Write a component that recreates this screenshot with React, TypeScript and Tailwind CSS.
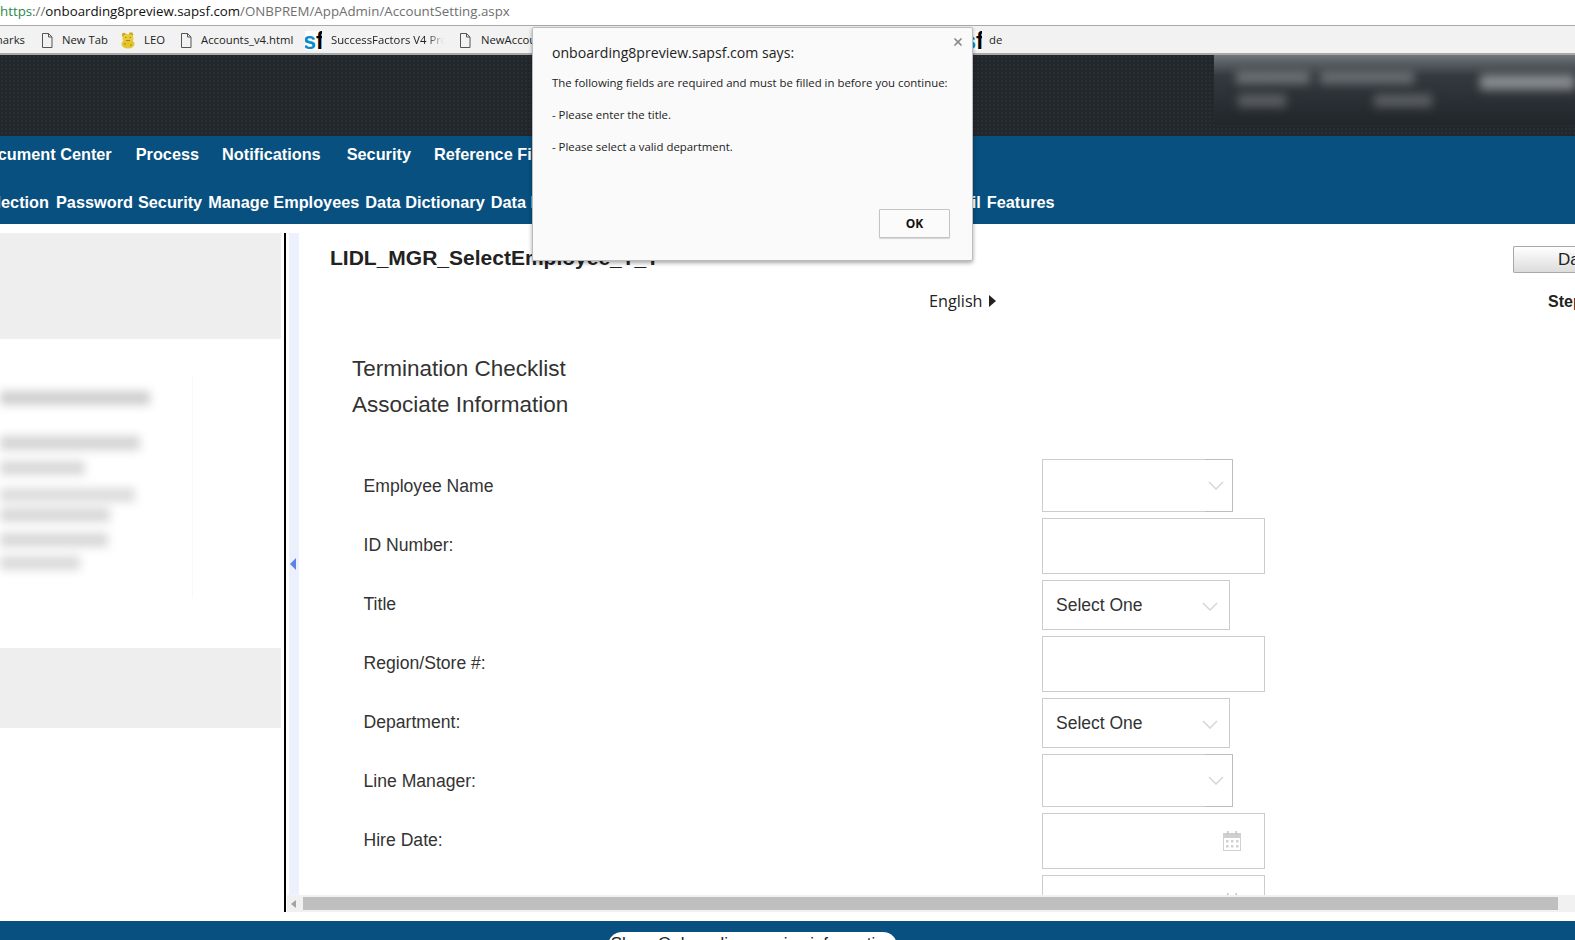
import { X } from "lucide-react";

const sans = "font-['Liberation_Sans',Arial,sans-serif]";
const ui = "font-['Open_Sans',sans-serif]";

function DocIcon() {
  return (
    <svg width="12" height="15" viewBox="0 0 12 15" fill="none" stroke="#555" strokeWidth="1" className="shrink-0">
      <path d="M1.5 .5h6l3.5 3.5v10.500h-9.500z" />
      <path d="M7.500 .5v3.500h3.500" />
    </svg>
  );
}

function SfLogo() {
  return (
    <span className={`flex h-[19px] w-[17px] shrink-0 items-end justify-center overflow-hidden bg-white pb-[1px] font-bold leading-[16px] ${sans}`}>
      <span className="text-[23px] text-[#0a8ccb]">s</span>
      <span className="text-[23px] text-black">f</span>
    </span>
  );
}

function LeoIcon() {
  return (
    <svg width="14" height="17" viewBox="0 0 14 17" className="shrink-0">
      <circle cx="3" cy="3" r="2.200" fill="#c9a82a" />
      <circle cx="10" cy="2.500" r="2.200" fill="#c9a82a" />
      <ellipse cx="7" cy="6.500" rx="5.500" ry="4.500" fill="#e9cc36" />
      <ellipse cx="7" cy="12" rx="6.500" ry="4.500" fill="#e3c42f" />
      <path d="M4 5.500h1.500M8.500 5.500h1.500M5 8.500h4M3 12h2M9 13h2" stroke="#a88a1c" strokeWidth="1" fill="none" />
    </svg>
  );
}

function Chevron() {
  return (
    <svg width="16" height="9" viewBox="0 0 16 9" fill="none" stroke="#d6d6d6" strokeWidth="1.500">
      <path d="M1 1l7 7 7-7" />
    </svg>
  );
}

function CalendarIcon() {
  return (
    <svg width="18" height="20" viewBox="0 0 18 20" className="shrink-0">
      <rect x=".5" y="2.500" width="17" height="17" fill="#fff" stroke="#d0d0d0" />
      <rect x="1" y="3" width="16" height="4" fill="#cfcfcf" />
      <rect x="4" y="0" width="1.500" height="4" fill="#c4c4c4" />
      <rect x="12.500" y="0" width="1.500" height="4" fill="#c4c4c4" />
      {[3, 8, 13].map((x) =>
        [9, 14].map((y) => <rect key={`${x}-${y}`} x={x} y={y} width="2.500" height="2.500" fill="#d2d2d2" />)
      )}
    </svg>
  );
}

// the wider lookup boxes have a darker corner round the arrow
function LookupBox() {
  return (
    <div className="flex h-[53px] w-[191px] shrink-0 justify-end border border-[#cccccc] bg-white">
      <div className="-my-px -mr-px flex w-[28px] items-center justify-center border-y border-r border-[#bdbdbd] pr-[6px]">
        <Chevron />
      </div>
    </div>
  );
}

function SelectBox() {
  return (
    <div className={`flex h-[50px] w-[188px] shrink-0 items-center justify-between border border-[#cccccc] bg-white pl-[13px] pr-[11px] text-[17.500px] text-[#333] ${sans}`}>
      <span>Select One</span>
      <span className="mt-[3px] flex">
        <Chevron />
      </span>
    </div>
  );
}

function TextBox({ calendar }: { calendar?: boolean }) {
  return (
    <div className="flex h-[56px] w-[223px] shrink-0 items-center justify-end border border-[#cccccc] bg-white pr-[23px]">
      {calendar && <CalendarIcon />}
    </div>
  );
}

const labels = ["Employee Name", "ID Number:", "Title", "Region/Store #:", "Department:", "Line Manager:", "Hire Date:"];

const blurLines = [
  { w: "w-[150px]", mt: "mt-[52px]", tone: "bg-[#cfcfcf]" },
  { w: "w-[140px]", mt: "mt-[31px]", tone: "bg-[#d4d4d4]" },
  { w: "w-[85px]", mt: "mt-[11px]", tone: "bg-[#d8d8d8]" },
  { w: "w-[135px]", mt: "mt-[13px]", tone: "bg-[#dcdcdc]" },
  { w: "w-[110px]", mt: "mt-[6px]", tone: "bg-[#d8d8d8]" },
  { w: "w-[108px]", mt: "mt-[11px]", tone: "bg-[#d8d8d8]" },
  { w: "w-[80px]", mt: "mt-[9px]", tone: "bg-[#dadada]" },
];

export default function App() {
  return (
    <div className={`relative flex h-[940px] w-[1575px] flex-col overflow-hidden bg-white ${sans}`}>
      {/* Browser address bar */}
      <div className={`flex h-[26px] shrink-0 items-center border-b border-[#a9a9a9] bg-white pb-[2px] text-[13.300px] whitespace-nowrap text-[#6f6f6f] ${ui}`}>
        <span className="text-[#2a8a4a]">https</span>
        <span>://</span>
        <span className="text-[#111]">onboarding8preview.sapsf.com</span>
        <span>/ONBPREM/AppAdmin/AccountSetting.aspx</span>
      </div>

      {/* Bookmarks */}
      <div className={`flex h-[29px] shrink-0 items-center overflow-hidden border-b-2 border-[#a9a9a9] bg-[#f2f2f2] pt-[1px] text-[11.300px] whitespace-nowrap text-[#222] ${ui}`}>
        <span className="flex w-[25px] justify-end overflow-hidden">
          <span className="shrink-0">Bookmarks</span>
        </span>
        <span className="ml-[16px] flex"><DocIcon /></span>
        <span className="ml-[9px] w-[46px]">New Tab</span>
        <span className="ml-[13px] flex"><LeoIcon /></span>
        <span className="ml-[9px] w-[22px]">LEO</span>
        <span className="ml-[14px] flex"><DocIcon /></span>
        <span className="ml-[9px] w-[93px]">Accounts_v4.html</span>
        <span className="ml-[11px] flex"><SfLogo /></span>
        <span className="ml-[9px] w-[113px] overflow-hidden [mask-image:linear-gradient(to_right,black_85%,transparent)]">SuccessFactors V4 Process</span>
        <span className="ml-[15px] flex"><DocIcon /></span>
        <span className="ml-[10px] w-[60px] overflow-hidden">NewAccount</span>
        <span className="ml-[424px] flex"><SfLogo /></span>
        <span className="ml-[7px]">de</span>
      </div>

      {/* Dark header */}
      <div className="flex h-[81px] shrink-0 justify-end bg-[#22272c] bg-[radial-gradient(#2a2f35_1px,transparent_1px)] bg-[length:4px_4px]">
        <div className="h-[70px] w-[361px] overflow-hidden bg-gradient-to-b from-[#70767a] via-[#33393e] via-[30%] to-[#21262b]">
          <div className="mt-[15px] flex items-start blur-[5px]">
            <div className="ml-[22px] h-[14px] w-[74px] bg-[#6a6f72]" />
            <div className="ml-[10px] h-[14px] w-[94px] bg-[#666b6f]" />
            <div className="ml-[66px] mt-[4px] h-[16px] w-[95px] bg-[#85898d]" />
          </div>
          <div className="mt-[4px] flex blur-[5px]">
            <div className="ml-[24px] h-[13px] w-[48px] bg-[#5a5e62]" />
            <div className="ml-[88px] h-[13px] w-[58px] bg-[#5a5e62]" />
          </div>
        </div>
      </div>

      {/* Blue nav */}
      <div className="flex h-[88px] shrink-0 flex-col overflow-hidden bg-[#07507f] text-[16.300px] font-bold whitespace-nowrap text-white">
        <div className="mt-[9px] flex h-[19px] -translate-x-[24px] items-center">
          <span>Document Center</span>
          <span className="ml-[24px]">Process</span>
          <span className="ml-[23px]">Notifications</span>
          <span className="ml-[26px]">Security</span>
          <span className="ml-[23px]">Reference Files</span>
        </div>
        <div className="mt-[29px] flex h-[19px] items-center">
          <span className="flex w-[49px] justify-end overflow-hidden">
            <span className="shrink-0">Collection</span>
          </span>
          <span className="ml-[7px]">Password</span>
          <span className="ml-[5px]">Security</span>
          <span className="ml-[6px]">Manage Employees</span>
          <span className="ml-[6px]">Data Dictionary</span>
          <span className="ml-[6px] w-[481px]">Data Retention</span>
          <span className="w-[15px]">il</span>
          <span>Features</span>
        </div>
      </div>

      {/* Main area */}
      <div className="flex h-[697px] shrink-0 pt-[9px] pb-[9px]">
        <div className="flex w-[281px] shrink-0 flex-col overflow-hidden">
          <div className="h-[106px] shrink-0 bg-[#eeeeee]" />
          <div className="h-[309px] shrink-0 pt-[36px]">
            <div className="flow-root h-[223px] w-[193px] border-r border-[#f8f8f8]">
              <div className="-mt-[36px] flex flex-col blur-[5px]">
                {blurLines.map((line, i) => (
                  <div key={i} className={`h-[14px] shrink-0 ${line.w} ${line.mt} ${line.tone}`} />
                ))}
              </div>
            </div>
          </div>
          <div className="h-[80px] shrink-0 bg-[#eeeeee]" />
        </div>
        <div className="ml-[3px] w-[2px] shrink-0 bg-black" />

        <div className="flex min-w-0 flex-1 flex-col">
          <div className="flex h-[662px] shrink-0 overflow-hidden">
            <div className="ml-[3px] flex w-[10px] shrink-0 items-center bg-[#ecf1fd] pl-[1px]">
              <svg width="6" height="12" viewBox="0 0 6 12"><path d="M6 0v12L0 6z" fill="#5b82e6" /></svg>
            </div>

            <div className="flex min-w-0 flex-1 flex-col">
              <div className="flex h-[40px] shrink-0 items-start justify-between">
                <span className="mt-[11px] ml-[31px] text-[21px] leading-[27px] font-bold text-[#222]">LIDL_MGR_SelectEmployee_T_T</span>
                <button className="mt-[13px] h-[27px] w-[62px] overflow-hidden rounded-l-[2px] border border-r-0 border-[#a8a8a8] bg-gradient-to-b from-white to-[#dcdcdc] pl-[44px] text-left text-[17px] leading-[23px] whitespace-nowrap text-[#222]">
                  Date
                </button>
              </div>

              <div className="mt-[16px] flex h-[24px] shrink-0 items-center justify-between">
                <span className={`ml-[630px] flex items-center gap-[6px] text-[16.200px] text-[#222] ${ui}`}>
                  English
                  <svg width="7" height="12" viewBox="0 0 7 12"><path d="M0 0v12l7-6z" fill="#222" /></svg>
                </span>
                <span className="mt-[2px] w-[27px] overflow-hidden text-[16px] font-bold whitespace-nowrap text-[#222]">Step 1</span>
              </div>

              <div className="mt-[38px] ml-[53px] shrink-0 text-[22.500px] leading-[36px] text-[#333]">
                <div>Termination Checklist</div>
                <div>Associate Information</div>
              </div>

              <div className="mt-[36px] flex">
                <div className="-mt-[2px] ml-[64.500px] w-[678.500px] shrink-0 text-[17.600px] text-[#333]">
                  {labels.map((label) => (
                    <div key={label} className="flex h-[59px] items-center">{label}</div>
                  ))}
                </div>
                <div className="flex flex-col gap-[6px]">
                  <LookupBox />
                  <TextBox />
                  <SelectBox />
                  <TextBox />
                  <SelectBox />
                  <LookupBox />
                  <TextBox calendar />
                  <TextBox calendar />
                </div>
              </div>
            </div>
          </div>

          {/* Horizontal scrollbar */}
          <div className="ml-px flex h-[17px] shrink-0 items-center border-y-2 border-[#f1f1f1] bg-[#f1f1f1]">
            <svg width="5" height="8" viewBox="0 0 5 8" className="ml-[4px]"><path d="M5 0v8L0 4z" fill="#a3a3a3" /></svg>
            <div className="ml-[7px] h-[13px] w-[1255px] bg-[#bfbfbf]" />
          </div>
        </div>
      </div>

      {/* Footer */}
      <div className="flex h-[19px] shrink-0 overflow-hidden bg-[#07507f] pt-[11px] pl-[608px]">
        <span className="flex h-[32px] w-[289px] items-start justify-center rounded-[14px] bg-white text-[17px] leading-[24px] whitespace-nowrap text-[#222]">
          Show Onboarding service information
        </span>
      </div>

      {/* Alert dialog */}
      <div className={`absolute top-[27px] left-[532px] flex h-[234px] w-[441px] flex-col rounded-[2px] border border-[#bcbcbc] bg-[#fafafa] pt-[14px] pr-[22px] pb-[22px] pl-[19px] shadow-[0_2px_4px_rgba(0,0,0,0.35)] ${ui}`}>
        <X size={12} strokeWidth={3.5} className="absolute top-[8px] right-[8px] text-[#888]" />
        <div className="text-[14.100px] leading-[22px] text-[#222]">onboarding8preview.sapsf.com says:</div>
        <div className="mt-[3px] text-[11.400px] leading-[32px] whitespace-nowrap text-[#222]">
          <div>The following fields are required and must be filled in before you continue:</div>
          <div>- Please enter the title.</div>
          <div>- Please select a valid department.</div>
        </div>
        <button className="mt-auto h-[29px] w-[71px] self-end rounded-[1px] border border-[#c4c4c4] bg-[#fbfbfb] text-[12px] font-bold text-[#111] shadow-[0_1px_1px_rgba(0,0,0,0.15)]">
          OK
        </button>
      </div>
    </div>
  );
}
